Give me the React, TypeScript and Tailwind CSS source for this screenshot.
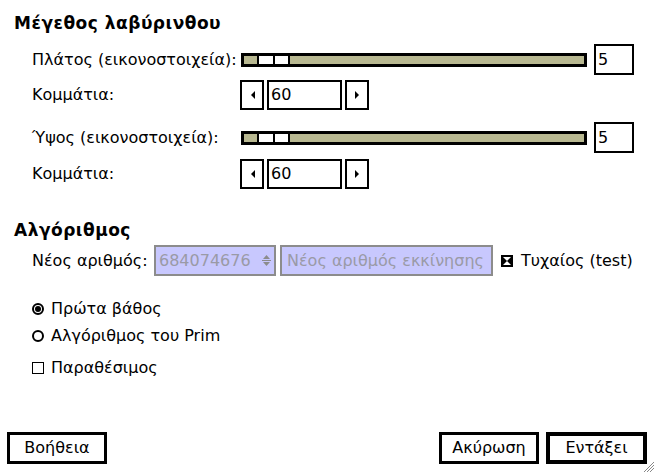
import React from "react";

const Slider: React.FC = () => (
  <div className="w-[346px] h-[14px] border-[3px] border-black bg-[#b8b891] flex">
    <div className="ml-[13px] h-full flex border-x-2 border-black bg-white">
      <div className="w-[14px] h-full" />
      <div className="w-[2px] h-full bg-black" />
      <div className="w-[13px] h-full" />
    </div>
  </div>
);

const Arrow: React.FC<{ dir: "left" | "right" }> = ({ dir }) => (
  <svg width="5" height="8" viewBox="0 0 5 8">
    {dir === "left" ? <polygon points="5,0 5,8 1,4" fill="#000" /> : <polygon points="0,0 0,8 4,4" fill="#000" />}
  </svg>
);

const Spin: React.FC<{ value: string }> = ({ value }) => (
  <div className="flex gap-[3px] h-[30px]">
    <div className="w-[24px] h-full border-2 border-black flex items-center justify-center">
      <Arrow dir="left" />
    </div>
    <div className="w-[75px] h-full border-2 border-black flex items-center pl-[2px] leading-none">{value}</div>
    <div className="w-[24px] h-full border-2 border-black flex items-center justify-center">
      <Arrow dir="right" />
    </div>
  </div>
);

const ValueBox: React.FC<{ value: string }> = ({ value }) => (
  <div className="w-[40px] h-[31px] border-2 border-black flex items-center pl-[2px] leading-none">{value}</div>
);

const Radio: React.FC<{ checked?: boolean }> = ({ checked }) => (
  <div className="w-[12px] h-[12px] rounded-full border-2 border-black flex items-center justify-center">
    {checked && <div className="w-[6px] h-[6px] rounded-full bg-black" />}
  </div>
);

const App: React.FC = () => (
  <div className="w-[654px] h-[472px] bg-white text-black text-[16px] font-['DejaVu_Sans',sans-serif] flex flex-col relative">
    <div className="pl-[14px] pt-[13px]">
      <div className="h-[20px] leading-[20px] font-bold text-[17px] tracking-[0.5px]">Μέγεθος λαβύρινθου</div>

      <div className="pl-[18px] grid grid-cols-[209px_1fr] items-center">
        <div className="mt-[11px]">Πλάτος (εικονοστοιχεία):</div>
        <div className="mt-[11px] flex items-center gap-[7px]">
          <Slider />
          <ValueBox value="5" />
        </div>

        <div className="mt-[5px]">Κομμάτια:</div>
        <div className="mt-[5px] -ml-[1px]">
          <Spin value="60" />
        </div>

        <div className="mt-[12px]">Ύψος (εικονοστοιχεία):</div>
        <div className="mt-[12px] flex items-center gap-[7px]">
          <Slider />
          <ValueBox value="5" />
        </div>

        <div className="mt-[6px]">Κομμάτια:</div>
        <div className="mt-[6px] -ml-[1px]">
          <Spin value="60" />
        </div>
      </div>

      <div className="mt-[31px] h-[20px] leading-[20px] font-bold text-[17px] tracking-[0.5px]">Αλγόριθμος</div>

      <div className="pl-[18px] mt-[5px] flex items-center h-[31px]">
        <div className="w-[122px] whitespace-nowrap">Νέος αριθμός:</div>
        <div className="w-[122px] h-full border-2 border-[#8c8c8c] bg-[#c8c8fe] flex items-center text-[#9a9aa6] pl-[3px]">
          <span className="flex-1">684074676</span>
          <div className="flex flex-col items-center justify-center w-[12px] mr-[2px] gap-[1px]">
            <svg width="7" height="4" viewBox="0 0 7 4"><polygon points="0,4 7,4 3.5,0" fill="#8c8c8c" /></svg>
            <div className="w-[9px] h-[1px] bg-[#8c8c8c]" />
            <svg width="7" height="4" viewBox="0 0 7 4"><polygon points="0,0 7,0 3.5,4" fill="#8c8c8c" /></svg>
          </div>
        </div>
        <div className="ml-[4px] w-[213px] h-full border-2 border-[#8c8c8c] bg-[#c8c8fe] flex items-center text-[#9a9aa6] pl-[5px] whitespace-nowrap overflow-hidden">
          Νέος αριθμός εκκίνησης
        </div>
        <svg className="ml-[8px]" width="12" height="12" viewBox="0 0 12 12">
          <rect x="0" y="0" width="12" height="12" fill="#000" />
          <polygon points="2,2 10,2 6,6" fill="#fff" />
          <polygon points="2,10 10,10 6,6" fill="#fff" />
        </svg>
        <span className="ml-[8px] whitespace-nowrap">Τυχαίος (test)</span>
      </div>

      <div className="pl-[18px] mt-[24px] flex flex-col">
        <div className="flex items-center gap-[7px] h-[18px]">
          <Radio checked />
          <span>Πρώτα βάθος</span>
        </div>
        <div className="flex items-center gap-[7px] h-[18px] mt-[9px]">
          <Radio />
          <span>Αλγόριθμος του Prim</span>
        </div>
        <div className="flex items-center gap-[7px] h-[18px] mt-[14px]">
          <div className="w-[12px] h-[12px] border border-black" />
          <span>Παραθέσιμος</span>
        </div>
      </div>
    </div>

    <div className="flex-1" />

    <div className="flex items-center px-[7px] pb-[8px] gap-[7px]">
      <div className="w-[100px] h-[32px] border-[3px] border-black flex items-center justify-center">Βοήθεια</div>
      <div className="flex-1" />
      <div className="w-[100px] h-[32px] border-[3px] border-black flex items-center justify-center">Ακύρωση</div>
      <div className="w-[101px] h-[32px] border-[4px] border-black flex items-center justify-center">Εντάξει</div>
    </div>

    <svg className="absolute right-0 bottom-0" width="12" height="12" viewBox="0 0 12 12">
      <line x1="12" y1="2" x2="2" y2="12" stroke="#888" strokeWidth="1" />
      <line x1="12" y1="5" x2="5" y2="12" stroke="#888" strokeWidth="1" />
      <line x1="12" y1="8" x2="8" y2="12" stroke="#888" strokeWidth="1" />
    </svg>
  </div>
);

export default App;
